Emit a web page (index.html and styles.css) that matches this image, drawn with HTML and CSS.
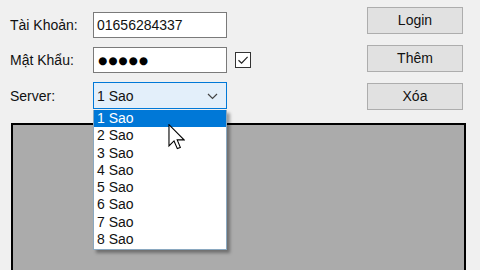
FILE: index.html
```html
<!DOCTYPE html>
<html>
<head>
<meta charset="utf-8">
<link rel="stylesheet" href="styles.css">
</head>
<body>
<div class="window">
  <div class="top">
    <div class="form">
      <div class="label">Tài Khoản:</div>
      <div class="textbox">01656284337</div>
      <div></div>
      <div class="label">Mật Khẩu:</div>
      <div class="textbox pass">●●●●●</div>
      <div class="check">
        <svg width="14" height="14" viewBox="0 0 14 14"><path d="M2.5 7.2 L5.6 10.2 L11.6 3.8" fill="none" stroke="#222" stroke-width="1.2"/></svg>
      </div>
      <div class="label">Server:</div>
      <div class="combo-wrap">
        <div class="combo">
          <span>1 Sao</span>
          <svg class="chev" width="11" height="7" viewBox="0 0 11 7"><path d="M1 1 L5.5 5.5 L10 1" fill="none" stroke="#444" stroke-width="1.2"/></svg>
        </div>
        <ul class="dropdown">
          <li class="sel">1 Sao</li>
          <li>2 Sao</li>
          <li>3 Sao</li>
          <li>4 Sao</li>
          <li>5 Sao</li>
          <li>6 Sao</li>
          <li>7 Sao</li>
          <li>8 Sao</li>
        </ul>
        <svg class="cursor" width="17" height="26" viewBox="0 0 12 19"><path d="M0.5 0.5 L0.5 16 L4.2 12.4 L6.6 18 L8.8 17.1 L6.5 11.6 L11.5 11.6 Z" fill="#fff" stroke="#000" stroke-width="0.8" stroke-linejoin="miter"/></svg>
      </div>
      <div></div>
    </div>
    <div class="buttons">
      <div class="btn">Login</div>
      <div class="btn">Thêm</div>
      <div class="btn">Xóa</div>
    </div>
  </div>
  <div class="panel"></div>
</div>
</body>
</html>
```
FILE: styles.css
```css
html, body {
  margin: 0;
  padding: 0;
  width: 480px;
  height: 270px;
  overflow: hidden;
  background: #f0f0f0;
  font-family: "Liberation Sans", Arial, sans-serif;
  font-size: 14px;
  color: #111;
}
.window {
  display: flex;
  flex-direction: column;
  height: 270px;
}
.top {
  display: flex;
  padding: 7px 17px 0 10px;
}
.form {
  margin-top: 5px;
  display: grid;
  grid-template-columns: 83px 134px 24px;
  grid-template-rows: 26px 26px 27px;
  row-gap: 9px;
  align-items: center;
}
.label {
  line-height: 16px;
}
.textbox {
  box-sizing: border-box;
  height: 26px;
  background: #fff;
  border: 1px solid #7a7a7a;
  padding: 0 0 0 3px;
  line-height: 24px;
}
.pass {
  font-family: "DejaVu Sans", sans-serif;
  font-size: 10.5px;
  letter-spacing: 1px;
  padding-left: 4px;
  color: #000;
}
.check {
  justify-self: end;
  box-sizing: border-box;
  width: 16px;
  height: 16px;
  border: 1px solid #333;
  background: #fff;
  display: flex;
  align-items: center;
  justify-content: center;
}
.combo-wrap {
  position: relative;
  height: 27px;
}
.combo {
  box-sizing: border-box;
  height: 27px;
  background: #e3effa;
  border: 1px solid #0078d7;
  display: flex;
  align-items: center;
  justify-content: space-between;
  padding: 0 8px 0 3px;
}
.chev {
  margin-top: 1px;
}
.dropdown {
  position: absolute;
  top: 28px;
  left: 0;
  width: 134px;
  box-sizing: border-box;
  margin: 0;
  padding: 0 0 1px 0;
  list-style: none;
  background: #fff;
  border: 1px solid #8aa8c0;
  border-top: none;
  box-shadow: 3px 3px 3px rgba(0,0,0,0.35);
  z-index: 2;
}
.dropdown li {
  height: 17.3px;
  line-height: 17.3px;
  padding-left: 3px;
}
.dropdown li.sel {
  background: #0078d7;
  color: #fff;
}
.cursor {
  position: absolute;
  left: 75px;
  top: 42px;
  z-index: 3;
}
.buttons {
  margin-left: auto;
  width: 96px;
  display: flex;
  flex-direction: column;
  gap: 11px;
}
.btn {
  box-sizing: border-box;
  height: 27px;
  background: #e1e1e1;
  border: 1px solid #adadad;
  text-align: center;
  line-height: 25px;
}
.panel {
  margin: 13px 14px 0 11px;
  flex: 1;
  background: #ababab;
  border: 2px solid #000;
  border-bottom: none;
}
```
